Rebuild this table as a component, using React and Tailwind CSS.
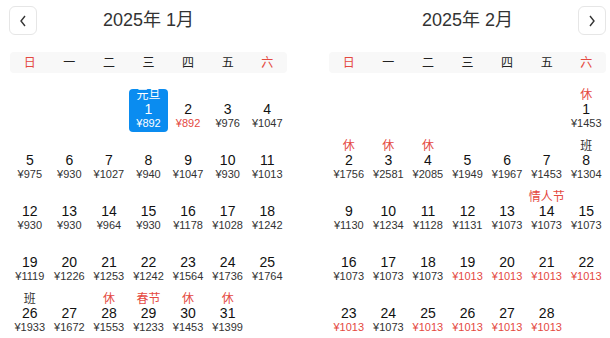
import React from 'react';

const RED = 'text-[#e4493f]';

const jan = {
  title: '2025年 1月',
  offset: 3,
  days: [
    ['元旦', 892, 'sel'], [null, 892, 'red'], [null, 976], [null, 1047],
    [null, 975], [null, 930], [null, 1027], [null, 940], [null, 1047], [null, 930], [null, 1013],
    [null, 930], [null, 930], [null, 964], [null, 930], [null, 1178], [null, 1028], [null, 1242],
    [null, 1119], [null, 1226], [null, 1253], [null, 1242], [null, 1564], [null, 1736], [null, 1764],
    ['班', 1933], [null, 1672], ['休', 1553], ['春节', 1233], ['休', 1453], ['休', 1399],
  ],
};

const feb = {
  title: '2025年 2月',
  offset: 6,
  days: [
    ['休', 1453],
    ['休', 1756], ['休', 2581], ['休', 2085], [null, 1949], [null, 1967], [null, 1453], ['班', 1304],
    [null, 1130], [null, 1234], [null, 1128], [null, 1131], [null, 1073], ['情人节', 1073], [null, 1073],
    [null, 1073], [null, 1073], [null, 1073], [null, 1013, 'red'], [null, 1013, 'red'], [null, 1013, 'red'], [null, 1013, 'red'],
    [null, 1013, 'red'], [null, 1073], [null, 1013, 'red'], [null, 1013, 'red'], [null, 1013, 'red'], [null, 1013, 'red'],
  ],
};

const weekdays = ['日', '一', '二', '三', '四', '五', '六'];

function NavButton({ dir }) {
  return (
    <button className="w-[28px] h-[29px] flex items-center justify-center bg-white border border-[#e6e6e6] rounded-[6px]">
      <svg width="10" height="14" viewBox="0 0 10 14" fill="none" stroke="#333" strokeWidth="1.4">
        {dir === 'left' ? <path d="M7 2 L3 7 L7 12" /> : <path d="M3 2 L7 7 L3 12" />}
      </svg>
    </button>
  );
}

function DayCell({ day, label, price, kind }) {
  const sel = kind === 'sel';
  const labelColor = sel ? 'text-white' : label === '班' ? 'text-[#333]' : RED;
  const priceColor = sel ? 'text-white' : kind === 'red' ? RED : 'text-[#333]';
  return (
    <div className={`h-[43px] flex flex-col items-center ${sel ? 'bg-[#0a8cf0] rounded-[4px]' : ''}`}>
      <div className={`h-[13px] leading-[13px] text-[12px] ${labelColor}`}>{label || ''}</div>
      <div className={`h-[15px] leading-[15px] text-[14px] ${sel ? 'text-white' : 'text-[#111]'}`}>{day}</div>
      <div className={`h-[13px] leading-[13px] text-[11px] ${priceColor}`}>¥{price}</div>
    </div>
  );
}

function Month({ data, nav }) {
  return (
    <div className="w-[277px]">
      <div className="grid grid-cols-[28px_1fr_28px] items-center h-[29px]">
        <div className={nav === 'left' ? '-ml-px' : ''}>{nav === 'left' && <NavButton dir="left" />}</div>
        <div className="text-center text-[18px] text-[#333] leading-[29px]">{data.title}</div>
        <div>{nav === 'right' && <NavButton dir="right" />}</div>
      </div>
      <div className="mt-[17px] h-[21px] bg-[#f8f8f8] rounded-[4px] grid grid-cols-7 items-center text-[12px]">
        {weekdays.map((w, i) => (
          <div key={w} className={`text-center ${i === 0 || i === 6 ? RED : 'text-[#222]'}`}>{w}</div>
        ))}
      </div>
      <div className="mt-[16px] grid grid-cols-7 gap-y-[8px]">
        {Array.from({ length: data.offset }).map((_, i) => <div key={'e' + i} />)}
        {data.days.map(([label, price, kind], i) => (
          <DayCell key={i} day={i + 1} label={label} price={price} kind={kind} />
        ))}
      </div>
    </div>
  );
}

export default function App() {
  return (
    <div
      className="w-[610px] h-[338px] bg-white flex gap-[42px] pl-[10px] pr-[4px] pt-[6px] overflow-hidden"
      style={{ fontFamily: '"Liberation Sans", "Noto Sans CJK SC", sans-serif' }}
    >
      <Month data={jan} nav="left" />
      <Month data={feb} nav="right" />
    </div>
  );
}
